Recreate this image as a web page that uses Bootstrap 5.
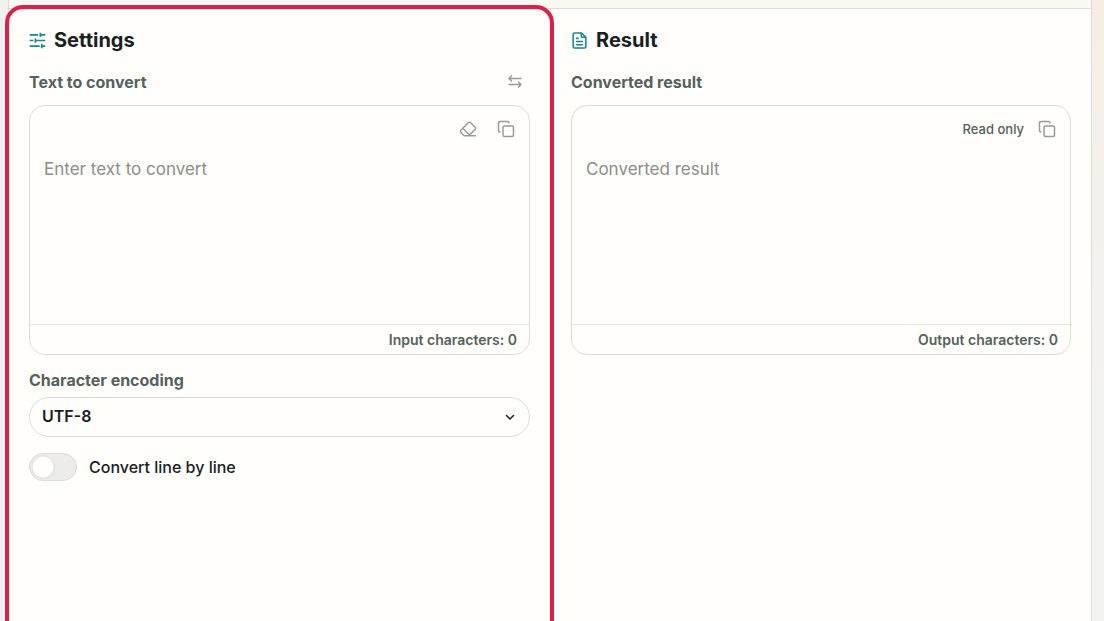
<!DOCTYPE html>
<html lang="en">
<head>
<meta charset="utf-8">
<meta name="viewport" content="width=device-width, initial-scale=1">
<title>Text converter</title>
<link href="https://cdn.jsdelivr.net/npm/bootstrap@5.3.0/dist/css/bootstrap.min.css" rel="stylesheet">
<style>
  :root { --line: #dddcd1; --paper: #fffefa; --ink: #17211f; --muted: #53625e; --accent: #e11d48; }
  body {
    font-family: Inter, "Liberation Sans", sans-serif;
    font-size: 16px; line-height: 24px; color: var(--ink);
    background: linear-gradient(90deg, #edf2ee 0, #edf2ee 50%, transparent 50%), linear-gradient(#f6eee4, #f4f1ec 200px, #f3f3f0 400px);
  }
  .shell { margin: 0 12px 0 8px; border: solid var(--line); border-width: 0 1px; background: #faf8f3; }
  .workspace { margin-top: 8px; border-top: 1px solid var(--line); background: var(--paper); }
  .pane { padding: 20px; }
  .pane + .pane { border-left: 1px solid var(--line); }
  .pane-active { outline: 4px solid var(--accent); border-radius: 14px 14px 0 0; background: var(--paper); }
  .pane-title { font-size: 20px; line-height: 22px; font-weight: 700; gap: 8px; margin-bottom: 17px; }
  .pane-title svg { color: #14898a; }
  .field-label { font-size: 16px; font-weight: 700; color: var(--muted); }
  .label-row { height: 28px; margin-bottom: 9px; padding-right: 6px; }
  .editor { border: 1px solid var(--line); border-radius: 16px; height: 250px; overflow: hidden; }
  .tools { height: 46px; padding: 0 14px; gap: 20px; }
  .tools-output { gap: 14px; }
  .tool { color: #999b96; line-height: 0; }
  .editor textarea { font-size: 17px; line-height: 24px; padding: 5px 14px; resize: none; color: var(--ink); }
  .editor textarea::placeholder { color: #8b8e89; opacity: 1; }
  .counter { border-top: 1px solid #e9e8e0; height: 30px; padding: 0 12px; font-size: 14px; line-height: 29px; font-weight: 600; color: var(--muted); }
  .readonly-tag { font-size: 13px; font-weight: 500; color: var(--muted); }
  .encoding-label { margin: 13px 0 5px; }
  .encoding { height: 40px; padding: 0 40px 2px 12px; border: 1px solid var(--line); font-weight: 600; color: var(--ink); background-color: var(--paper);
    background-image: url("data:image/svg+xml,%3Csvg xmlns='http://www.w3.org/2000/svg' viewBox='0 0 16 16' fill='none' stroke='%2317211f' stroke-width='1.5' stroke-linecap='round' stroke-linejoin='round'%3E%3Cpath d='M4.5 6.5 8 10l3.5-3.5'/%3E%3C/svg%3E"); background-size: 16px; background-position: right 11px center; }
  .line-switch { margin-top: 16px; gap: 12px; min-height: 28px; padding: 0; }
  .line-switch .form-check-input { width: 48px; height: 28px; margin: 0; float: none; border: 1px solid var(--line); background-color: #ebebe8;
    background-image: radial-gradient(circle at 13px 13px, var(--paper) 10px, #dededb 11px, transparent 12px); background-position: 0 0; background-size: 100% 100%; background-repeat: no-repeat; }
  .line-switch label { font-weight: 500; }
</style>
</head>
<body>
<div class="shell d-flex flex-column min-vh-100">
  <main class="workspace flex-grow-1 d-flex">
    <div class="row g-0 flex-grow-1">
      <section class="pane pane-active col-6 position-relative z-1">
        <h2 class="pane-title d-flex align-items-center">
          <svg width="17" height="17" viewBox="0 0 24 24" fill="none" stroke="currentColor" stroke-width="2.4" aria-hidden="true"><path d="M1 4h12M16 4h7M16 1v6M1 12h5M10 12h13M9 9v6M1 20h14M18 20h5M18 17v6"/></svg>
          Settings
        </h2>
        <div class="label-row d-flex align-items-center justify-content-between">
          <label class="field-label" for="source">Text to convert</label>
          <button type="button" class="tool btn border-0 p-0" aria-label="Swap"><svg width="18" height="18" viewBox="0 0 18 18" fill="none" stroke="currentColor" stroke-width="1.5" stroke-linecap="round" stroke-linejoin="round"><path d="M15 5.500H3M5.500 3l-2.500 2.500 2.500 2.500M3 11.500h12M12.500 9l2.500 2.500-2.500 2.500"/></svg></button>
        </div>
        <div class="editor d-flex flex-column">
          <div class="tools d-flex align-items-center justify-content-end">
            <button type="button" class="tool btn border-0 p-0" aria-label="Clear"><svg width="18" height="18" viewBox="0 0 24 24" fill="none" stroke="currentColor" stroke-width="2" stroke-linecap="round" stroke-linejoin="round"><path d="m7 21-4.300-4.300c-1-1-1-2.500 0-3.400l9.600-9.600c1-1 2.500-1 3.400 0l5.600 5.600c1 1 1 2.500 0 3.400L13 21M22 21H7M5 11l9 9"/></svg></button>
            <button type="button" class="tool btn border-0 p-0" aria-label="Copy"><svg width="18" height="18" viewBox="0 0 24 24" fill="none" stroke="currentColor" stroke-width="2" stroke-linecap="round" stroke-linejoin="round"><rect x="8" y="8" width="14" height="14" rx="2"/><path d="M4 16c-1.100 0-2-.900-2-2V4c0-1.100.900-2 2-2h10c1.100 0 2 .900 2 2"/></svg></button>
          </div>
          <textarea id="source" class="flex-grow-1 w-100 border-0 bg-transparent" placeholder="Enter text to convert"></textarea>
          <div class="counter text-end">Input characters: 0</div>
        </div>
        <label class="field-label encoding-label d-block" for="encoding">Character encoding</label>
        <select id="encoding" class="encoding form-select rounded-pill"><option>UTF-8</option></select>
        <div class="line-switch form-check form-switch d-flex align-items-center">
          <input class="form-check-input" type="checkbox" role="switch" id="byline">
          <label for="byline">Convert line by line</label>
        </div>
      </section>
      <section class="pane col-6">
        <h2 class="pane-title d-flex align-items-center">
          <svg width="17" height="17" viewBox="0 0 24 24" fill="none" stroke="currentColor" stroke-width="2.2" stroke-linecap="round" stroke-linejoin="round" aria-hidden="true"><path d="M15 1.500H5a2 2 0 0 0-2 2v17a2 2 0 0 0 2 2h14a2 2 0 0 0 2-2v-13zM14.500 1.500v4a2 2 0 0 0 2 2H21M8 9h2M8 13.500h8M8 18h8"/></svg>
          Result
        </h2>
        <div class="label-row d-flex align-items-center"><label class="field-label" for="result">Converted result</label></div>
        <div class="editor d-flex flex-column">
          <div class="tools tools-output d-flex align-items-center justify-content-end">
            <span class="readonly-tag">Read only</span>
            <button type="button" class="tool btn border-0 p-0" aria-label="Copy result"><svg width="18" height="18" viewBox="0 0 24 24" fill="none" stroke="currentColor" stroke-width="2" stroke-linecap="round" stroke-linejoin="round"><rect x="8" y="8" width="14" height="14" rx="2"/><path d="M4 16c-1.100 0-2-.900-2-2V4c0-1.100.900-2 2-2h10c1.100 0 2 .900 2 2"/></svg></button>
          </div>
          <textarea id="result" class="flex-grow-1 w-100 border-0 bg-transparent" placeholder="Converted result" readonly></textarea>
          <div class="counter text-end">Output characters: 0</div>
        </div>
      </section>
    </div>
  </main>
</div>
<script src="https://cdn.jsdelivr.net/npm/bootstrap@5.3.0/dist/js/bootstrap.bundle.min.js"></script>
</body>
</html>
